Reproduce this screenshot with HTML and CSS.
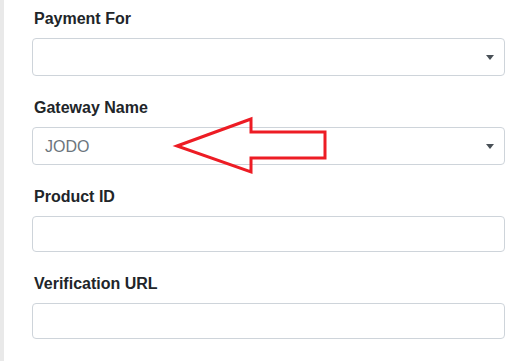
FILE: index.html
```html
<!DOCTYPE html>
<html>
  <head>
    <meta charset="utf-8" />
    <meta name="viewport" content="width=device-width, initial-scale=1.0" />
    <link rel="stylesheet" href="styles.css">
  </head>

  <body>
    <div class="sidebar"></div>
    <div id="wrap">
      <div class="formGroup">
        <label class="textElement" for="PaymentFor">Payment For</label>
        <div class="selectBox" id="PaymentFor">
          <span class="selected"></span>
          <span class="caret"></span>
        </div>
      </div>
      <div class="formGroup">
        <label class="textElement" for="GatewayName">Gateway Name</label>
        <div class="selectBox" id="GatewayName">
          <span class="selected">JODO</span>
          <span class="caret"></span>
          <svg class="pointer" width="160" height="64" viewBox="0 0 160 64">
            <polygon
              points="6,32 80,5 80,18 154,18 154,44 80,44 80,58"
              fill="none"
              stroke="#ed1c24"
              stroke-width="3"
              stroke-linejoin="miter"
            />
          </svg>
        </div>
      </div>
      <div class="formGroup">
        <label class="textElement" for="ProductID">Product ID</label>
        <input class="value" type="text" id="ProductID" />
      </div>
      <div class="formGroup">
        <label class="textElement" for="VerificationURL">Verification URL</label>
        <input class="value" type="text" id="VerificationURL" />
      </div>
    </div>
  </body>
</html>
```

FILE: styles.css
```css
html {
  font-family: "Liberation Sans", Arial, sans-serif;
}

body {
  margin: 0;
  height: 100vh;
  display: flex;
  background-color: #fff;
  color: #212529;
  overflow: hidden;
}

.sidebar {
  width: 4px;
  flex: none;
  background-color: #e9e9e9;
}

#wrap {
  flex: 1;
  display: flex;
  flex-direction: column;
  padding: 7px 16px 0 28px;
}

.formGroup {
  display: flex;
  flex-direction: column;
  margin: 0 0 20px;
}

.textElement {
  font-size: 16px;
  font-weight: 700;
  line-height: 24px;
  margin: 0 0 7px 2px;
}

.selectBox,
.value {
  position: relative;
  box-sizing: border-box;
  height: 38px;
  border: 1px solid #ced4da;
  border-radius: 4px;
  background-color: #fff;
  display: flex;
  align-items: center;
  padding: 0 12px;
  font: inherit;
  font-size: 16px;
}

.value {
  height: 36px;
  outline: none;
}

.selected {
  flex: 1;
  color: #6c757d;
  line-height: 24px;
  padding-top: 2px;
}

.caret {
  width: 0;
  height: 0;
  border-style: solid;
  border-width: 5px 4px 0;
  border-color: #495057 transparent transparent;
  margin-right: -2px;
}

.pointer {
  position: absolute;
  left: 138px;
  top: -14px;
}
```
